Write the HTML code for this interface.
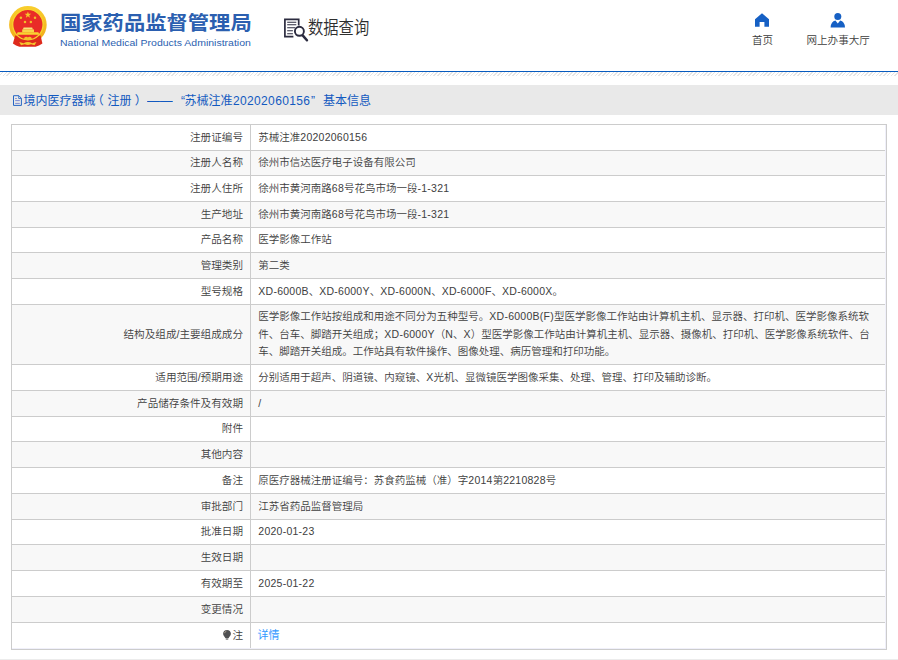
<!DOCTYPE html>
<html lang="zh-CN">
<head>
<meta charset="utf-8">
<title>国家药品监督管理局 数据查询</title>
<style>
html,body{margin:0;padding:0;background:#fff;}
body{width:898px;height:660px;position:relative;overflow:hidden;font-family:"Liberation Sans","Noto Sans CJK SC",sans-serif;color:#444;}
.abs{position:absolute;}
#emblem{position:absolute;left:0;top:0;width:56px;height:52px;}
#title{position:absolute;left:60.2px;top:8.7px;font-size:19.6px;font-weight:bold;color:#2b5fb0;white-space:nowrap;line-height:28px;transform-origin:0 50%;transform:scaleX(1.087);}
#sub{position:absolute;left:60px;top:35.8px;font-size:9.56px;color:#2b5fb0;white-space:nowrap;line-height:14px;transform-origin:0 50%;transform:scaleX(1.1);}
#qicon{position:absolute;left:283px;top:17px;width:26px;height:25px;}
#qtext{position:absolute;left:308px;top:15.2px;font-size:18px;line-height:26px;color:#2e2e2e;font-weight:350;white-space:nowrap;transform-origin:0 50%;transform:scaleX(0.85);}
.nav{position:absolute;font-size:10.55px;line-height:14px;color:#3c3c3c;font-weight:350;white-space:nowrap;}
#blue{position:absolute;left:0;top:70.6px;width:898px;height:1.4px;background:#075bbf;}
#hatch{position:absolute;left:0;top:72px;width:898px;height:4px;background:repeating-linear-gradient(135deg,#fff 0,#fff 1.6px,#e4e4e4 1.6px,#e4e4e4 2.65px);}
#bar{position:absolute;left:0;top:85px;width:898px;height:29.5px;background:#e9e9e9;}
#bartxt{position:absolute;left:24px;top:93.1px;font-size:12px;line-height:16px;color:#1259c0;white-space:nowrap;}
#bartxt .s{position:absolute;top:0;}
#bartxt .dg{letter-spacing:.35px;}
#bartxt .ls{transform-origin:0 50%;transform:scaleX(1.07);}
#tbl{position:absolute;left:11px;top:124px;width:874px;height:524px;border:1px solid #ccc;background:#f0f0fa;}
.r{position:absolute;left:0;width:873px;background:#fff;border-bottom:1px solid #ccc;font-size:10.51px;line-height:17.7px;font-weight:350;color:#404040;}
.r.g{background:#f8f8f8;}
.r.last{border-bottom:0;}
.k{position:absolute;left:0;top:0;bottom:0;width:238px;border-right:1px solid #ccc;box-sizing:content-box;display:flex;align-items:center;justify-content:flex-end;padding-right:7px;width:231px;white-space:nowrap;font-size:10.6px;}
.v{position:absolute;left:239px;top:0;bottom:0;right:0;display:flex;flex-direction:column;justify-content:center;padding-left:7.3px;white-space:nowrap;}
.ln{display:block;}
.l{letter-spacing:.25px;}
.lk{color:#3399ff;font-size:11px;margin-left:-0.8px;font-weight:400;}
.bulb{vertical-align:-1px;margin-right:1.4px;position:relative;left:0px;top:-0.3px;}
#foot{position:absolute;left:0;top:659px;width:898px;height:1px;background:#ececec;}
</style>
</head>
<body>
<svg id="emblem" viewBox="0 0 56 52">
<defs><linearGradient id="gd" x1="0" y1="0" x2="0" y2="1"><stop offset="0" stop-color="#f9cf2e"/><stop offset="1" stop-color="#f0a818"/></linearGradient></defs>
<circle cx="27.9" cy="24.7" r="18.8" fill="url(#gd)"/>
<path d="M15.2 35.6 L40.6 35.6 L42.4 43.4 Q39 45.6 35.6 46.8 L19.4 46.8 Q16 45.6 12.9 43.4 Z" fill="#de2a1c"/>
<circle cx="27.9" cy="24.6" r="15.2" fill="#e92c27" stroke="#f8d22c" stroke-width="1.3"/>
<path d="M22.9 29.5 L23.6 27.5 H32.2 L32.9 29.5 Z" fill="#f9e37a"/>
<rect x="22.2" y="29.4" width="11.8" height="3" fill="#f8d648"/>
<path d="M17.6 32.3 H38.4 L39.4 34.8 H16.6 Z" fill="#f9d230"/>
<polygon points="27.9,11.4 28.75,13.75 31.2,13.8 29.25,15.3 29.95,17.7 27.9,16.3 25.85,17.7 26.55,15.3 24.6,13.8 27.05,13.75" fill="#f5c72a"/>
<circle cx="20.9" cy="17.7" r="1.25" fill="#f2bd28"/><circle cx="35" cy="17.7" r="1.25" fill="#f2bd28"/>
<circle cx="25" cy="21.9" r="1.25" fill="#f2bd28"/><circle cx="30.9" cy="21.9" r="1.25" fill="#f2bd28"/>
<ellipse cx="26.2" cy="38.4" rx="2.1" ry="1.7" fill="#f4c12a"/><ellipse cx="29.6" cy="38.4" rx="2.1" ry="1.7" fill="#f4c12a"/>
<path d="M19.2 42 L23.6 43.2 Q27.9 41 32.2 43.2 L36.4 42 L34.6 45.3 L31 44.2 Q27.9 45.8 24.8 44.2 L21 45.3 Z" fill="#f4c62c"/>
</svg>
<div id="title">国家药品监督管理局</div>
<div id="sub">National Medical Products Administration</div>
<svg id="qicon" viewBox="0 0 26 25" fill="none" stroke="#2b2b3f">
<path d="M15.7 8.6 V2.3 H1.9 V19.7 H10.4" stroke-width="1.7"/>
<path d="M4.2 5.2H13.3M4.2 7.7H13.3M4.2 10.7H12.2M4.2 13.7H9.9M4.2 16.8H9.9" stroke-width="1.1"/>
<circle cx="16.4" cy="14.3" r="4.5" stroke-width="1.9" fill="#fff"/>
<path d="M19.9 18.6L23.9 23.3" stroke-width="2.5" stroke-linecap="round"/>
</svg>
<div id="qtext">数据查询</div>
<svg class="abs" style="left:754px;top:13px" width="16" height="14" viewBox="0 0 16 14"><path d="M8 0.3 L15 6.2 V13.8 H10.4 V9 H5.6 V13.8 H1 V6.2 Z" fill="#1660c4"/></svg>
<div class="nav" style="left:752px;top:33px">首页</div>
<svg class="abs" style="left:830px;top:12px" width="16" height="16" viewBox="0 0 16 16"><circle cx="7.8" cy="4.6" r="3.5" fill="#1660c4"/><path d="M0.6 15.4 Q1 9.6 5.4 8.6 L7.8 11.4 L10.2 8.6 Q14.6 9.6 15 15.4 Z" fill="#1660c4"/></svg>
<div class="nav" style="left:806.5px;top:33px">网上办事大厅</div>
<div id="blue"></div>
<div id="hatch"></div>
<div id="bar"></div>
<svg class="abs" style="left:12px;top:94px" width="12" height="13" viewBox="0 0 12 13" fill="none" stroke="#2566c4" stroke-width="1"><path d="M1.5 1.7 H6.9 L9.4 4.3 V11.4 H1.5 Z"/><path d="M6.7 2 V4.5 H9.2" stroke-width=".8"/><path d="M3.2 4.5H4.8M3.2 6.6H7.8M3.2 9.4H7.8" stroke="#6f80d0" stroke-width=".9"/></svg>
<div id="bartxt"><span class="s " style="left:-0.5px">境内医疗器械</span><span class="s " style="left:67.8px">（</span><span class="s " style="left:83.6px">注册</span><span class="s " style="left:110.8px">）</span><span class="s ls" style="left:123.1px">——</span><span class="s " style="left:157px">“</span><span class="s " style="left:160.6px">苏械注准</span><span class="s dg" style="left:209px">20202060156</span><span class="s " style="left:287px">”</span><span class="s " style="left:299px">基本信息</span></div>
<div id="tbl">
<div class="r" style="top:0px;height:25px"><div class="k">注册证编号</div><div class="v"><div>苏械注准<span class="l">20202060156</span></div></div></div>
<div class="r g" style="top:26px;height:24px"><div class="k">注册人名称</div><div class="v"><div>徐州市信达医疗电子设备有限公司</div></div></div>
<div class="r" style="top:51px;height:25px"><div class="k">注册人住所</div><div class="v"><div>徐州市黄河南路<span class="l">68</span>号花鸟市场一段<span class="l">-1-321</span></div></div></div>
<div class="r g" style="top:77px;height:25px"><div class="k">生产地址</div><div class="v"><div>徐州市黄河南路<span class="l">68</span>号花鸟市场一段<span class="l">-1-321</span></div></div></div>
<div class="r" style="top:103px;height:24px"><div class="k">产品名称</div><div class="v"><div>医学影像工作站</div></div></div>
<div class="r g" style="top:128px;height:25px"><div class="k">管理类别</div><div class="v"><div>第二类</div></div></div>
<div class="r" style="top:154px;height:25px"><div class="k">型号规格</div><div class="v"><div><span class="l">XD-6000B</span>、<span class="l">XD-6000Y</span>、<span class="l">XD-6000N</span>、<span class="l">XD-6000F</span>、<span class="l">XD-6000X</span>。</div></div></div>
<div class="r g" style="top:180px;height:59px"><div class="k">结构及组成/主要组成成分</div><div class="v"><div><span class="ln">医学影像工作站按组成和用途不同分为五种型号。<span class="l">XD-6000B(F)</span>型医学影像工作站由计算机主机、显示器、打印机、医学影像系统软</span><span class="ln">件、台车、脚踏开关组成；<span class="l">XD-6000Y</span>（<span class="l">N</span>、<span class="l">X</span>）型医学影像工作站由计算机主机、显示器、摄像机、打印机、医学影像系统软件、台</span><span class="ln">车、脚踏开关组成。工作站具有软件操作、图像处理、病历管理和打印功能。</span></div></div></div>
<div class="r" style="top:240px;height:25px"><div class="k">适用范围/预期用途</div><div class="v"><div>分别适用于超声、阴道镜、内窥镜、<span class="l">X</span>光机、显微镜医学图像采集、处理、管理、打印及辅助诊断。</div></div></div>
<div class="r g" style="top:266px;height:25px"><div class="k">产品储存条件及有效期</div><div class="v"><div><span class="l">/</span></div></div></div>
<div class="r" style="top:292px;height:24px"><div class="k">附件</div><div class="v"><div></div></div></div>
<div class="r g" style="top:317px;height:25px"><div class="k">其他内容</div><div class="v"><div></div></div></div>
<div class="r" style="top:343px;height:25px"><div class="k">备注</div><div class="v"><div>原医疗器械注册证编号：苏食药监械（准）字<span class="l">2014</span>第<span class="l">2210828</span>号</div></div></div>
<div class="r g" style="top:369px;height:25px"><div class="k">审批部门</div><div class="v"><div>江苏省药品监督管理局</div></div></div>
<div class="r" style="top:395px;height:24px"><div class="k">批准日期</div><div class="v"><div><span class="l">2020-01-23</span></div></div></div>
<div class="r g" style="top:420px;height:25px"><div class="k">生效日期</div><div class="v"><div></div></div></div>
<div class="r" style="top:446px;height:25px"><div class="k">有效期至</div><div class="v"><div><span class="l">2025-01-22</span></div></div></div>
<div class="r g" style="top:472px;height:25px"><div class="k">变更情况</div><div class="v"><div></div></div></div>
<div class="r last" style="top:498px;height:25px"><div class="k"><svg class="bulb" viewBox="0 0 8 10" width="8" height="10"><path d="M4 0.1 C1.7 0.1 0.1 1.8 0.1 3.8 C0.1 5.6 1.7 6.6 2.3 8 H5.7 C6.3 6.6 7.9 5.6 7.9 3.8 C7.9 1.8 6.3 0.1 4 0.1 Z" fill="#505052"/><rect x="2.5" y="8" width="3" height="1.9" rx=".8" fill="#9a9a9a"/><path d="M1.5 3.2 Q1.8 1.6 3.4 1.2" stroke="#c9b9a0" stroke-width=".7" fill="none"/></svg>注</div><div class="v"><div><a class="lk">详情</a></div></div></div>
</div>
<div id="foot"></div>
</body>
</html>
